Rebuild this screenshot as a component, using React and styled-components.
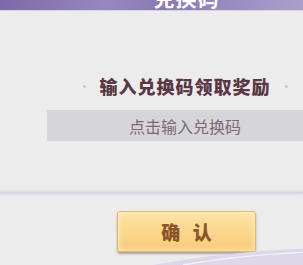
import React from 'react';
import styled, { createGlobalStyle } from 'styled-components';

const GlobalStyle = createGlobalStyle`
  html, body {
    margin: 0;
    padding: 0;
    background: #ececec;
  }
  body {
    font-family: "Noto Sans CJK SC", "Noto Sans", sans-serif;
  }
`;

function App() {
  return (
    <>
      <GlobalStyle />
      <Page>
        <Header>
          <Title>兑换码</Title>
        </Header>
        <Column>
          <Heading>
            <Dot />
            <HeadingText>输入兑换码领取奖励</HeadingText>
            <Dot />
          </Heading>
          <CodeInput type="text" placeholder="点击输入兑换码" />
        </Column>
        <Divider />
        <Footer>
          <ConfirmButton type="button">确 认</ConfirmButton>
        </Footer>
        <Swoosh viewBox="0 0 150 20" preserveAspectRatio="none">
          <path d="M0 20 C 50 10, 100 4, 150 2 L150 20 Z" fill="#dcd8ea" />
          <path d="M30 20 C 70 12, 110 8, 150 6" stroke="#f4f2f8" strokeWidth="1.5" fill="none" />
        </Swoosh>
      </Page>
    </>
  );
}

const Page = styled.div`
  position: relative;
  width: 303px;
  height: 265px;
  overflow: hidden;
  background: #ececec;
`;

const Header = styled.div`
  height: 10px;
  display: flex;
  justify-content: center;
  align-items: flex-end;
  padding-left: 70px;
  overflow: hidden;
  background: linear-gradient(100deg, #7d69a6 0%, #9887bf 35%, #8a78b2 55%, #9d8fc2 80%, #ad9fcb 100%);
  border-bottom: 1px solid #d8d2e6;
`;

const Title = styled.div`
  color: #fff;
  font-size: 21px;
  font-weight: 700;
  line-height: 1;
  letter-spacing: 1px;
  margin-bottom: 2px;
`;

const Column = styled.div`
  margin-left: 47px;
  width: 276px;
  display: flex;
  flex-direction: column;
  align-items: center;
`;

const Heading = styled.div`
  margin-top: 64px;
  display: flex;
  align-items: center;
  gap: 14px;
`;

const HeadingText = styled.div`
  font-size: 18px;
  font-weight: 900;
  line-height: 22px;
  color: #5a3744;
  letter-spacing: 1px;
`;

const Dot = styled.span`
  width: 3px;
  height: 3px;
  border-radius: 50%;
  background: #c9c6cc;
`;

const CodeInput = styled.input`
  box-sizing: border-box;
  margin-top: 13px;
  width: 100%;
  height: 31px;
  border: none;
  outline: none;
  background: #d6d5d8;
  text-align: center;
  font-family: inherit;
  font-size: 16px;
  padding: 0;

  &::placeholder {
    color: #7f6874;
  }
`;

const Divider = styled.div`
  margin-top: 51px;
  height: 2px;
  background: #d9d6e2;
  box-shadow: 0 0 3px 1px #dedbe6;
`;

const Footer = styled.div`
  display: flex;
  justify-content: center;
  padding-left: 70px;
  margin-top: 17px;
`;

const ConfirmButton = styled.button`
  box-sizing: border-box;
  width: 139px;
  height: 41px;
  border: 1px solid #e8b866;
  border-radius: 3px;
  background: linear-gradient(180deg, #fde2a6 0%, #fbd68c 55%, #f8c978 100%);
  box-shadow: 0 2px 2px rgba(120, 90, 60, 0.5), inset 0 0 6px rgba(255, 250, 230, 0.8);
  font-family: inherit;
  font-size: 19px;
  font-weight: 900;
  color: #8a5428;
  letter-spacing: 4px;
  padding: 0 0 0 4px;
`;

const Swoosh = styled.svg`
  position: absolute;
  right: 0;
  bottom: 0;
  width: 150px;
  height: 18px;
`;

export default App;
